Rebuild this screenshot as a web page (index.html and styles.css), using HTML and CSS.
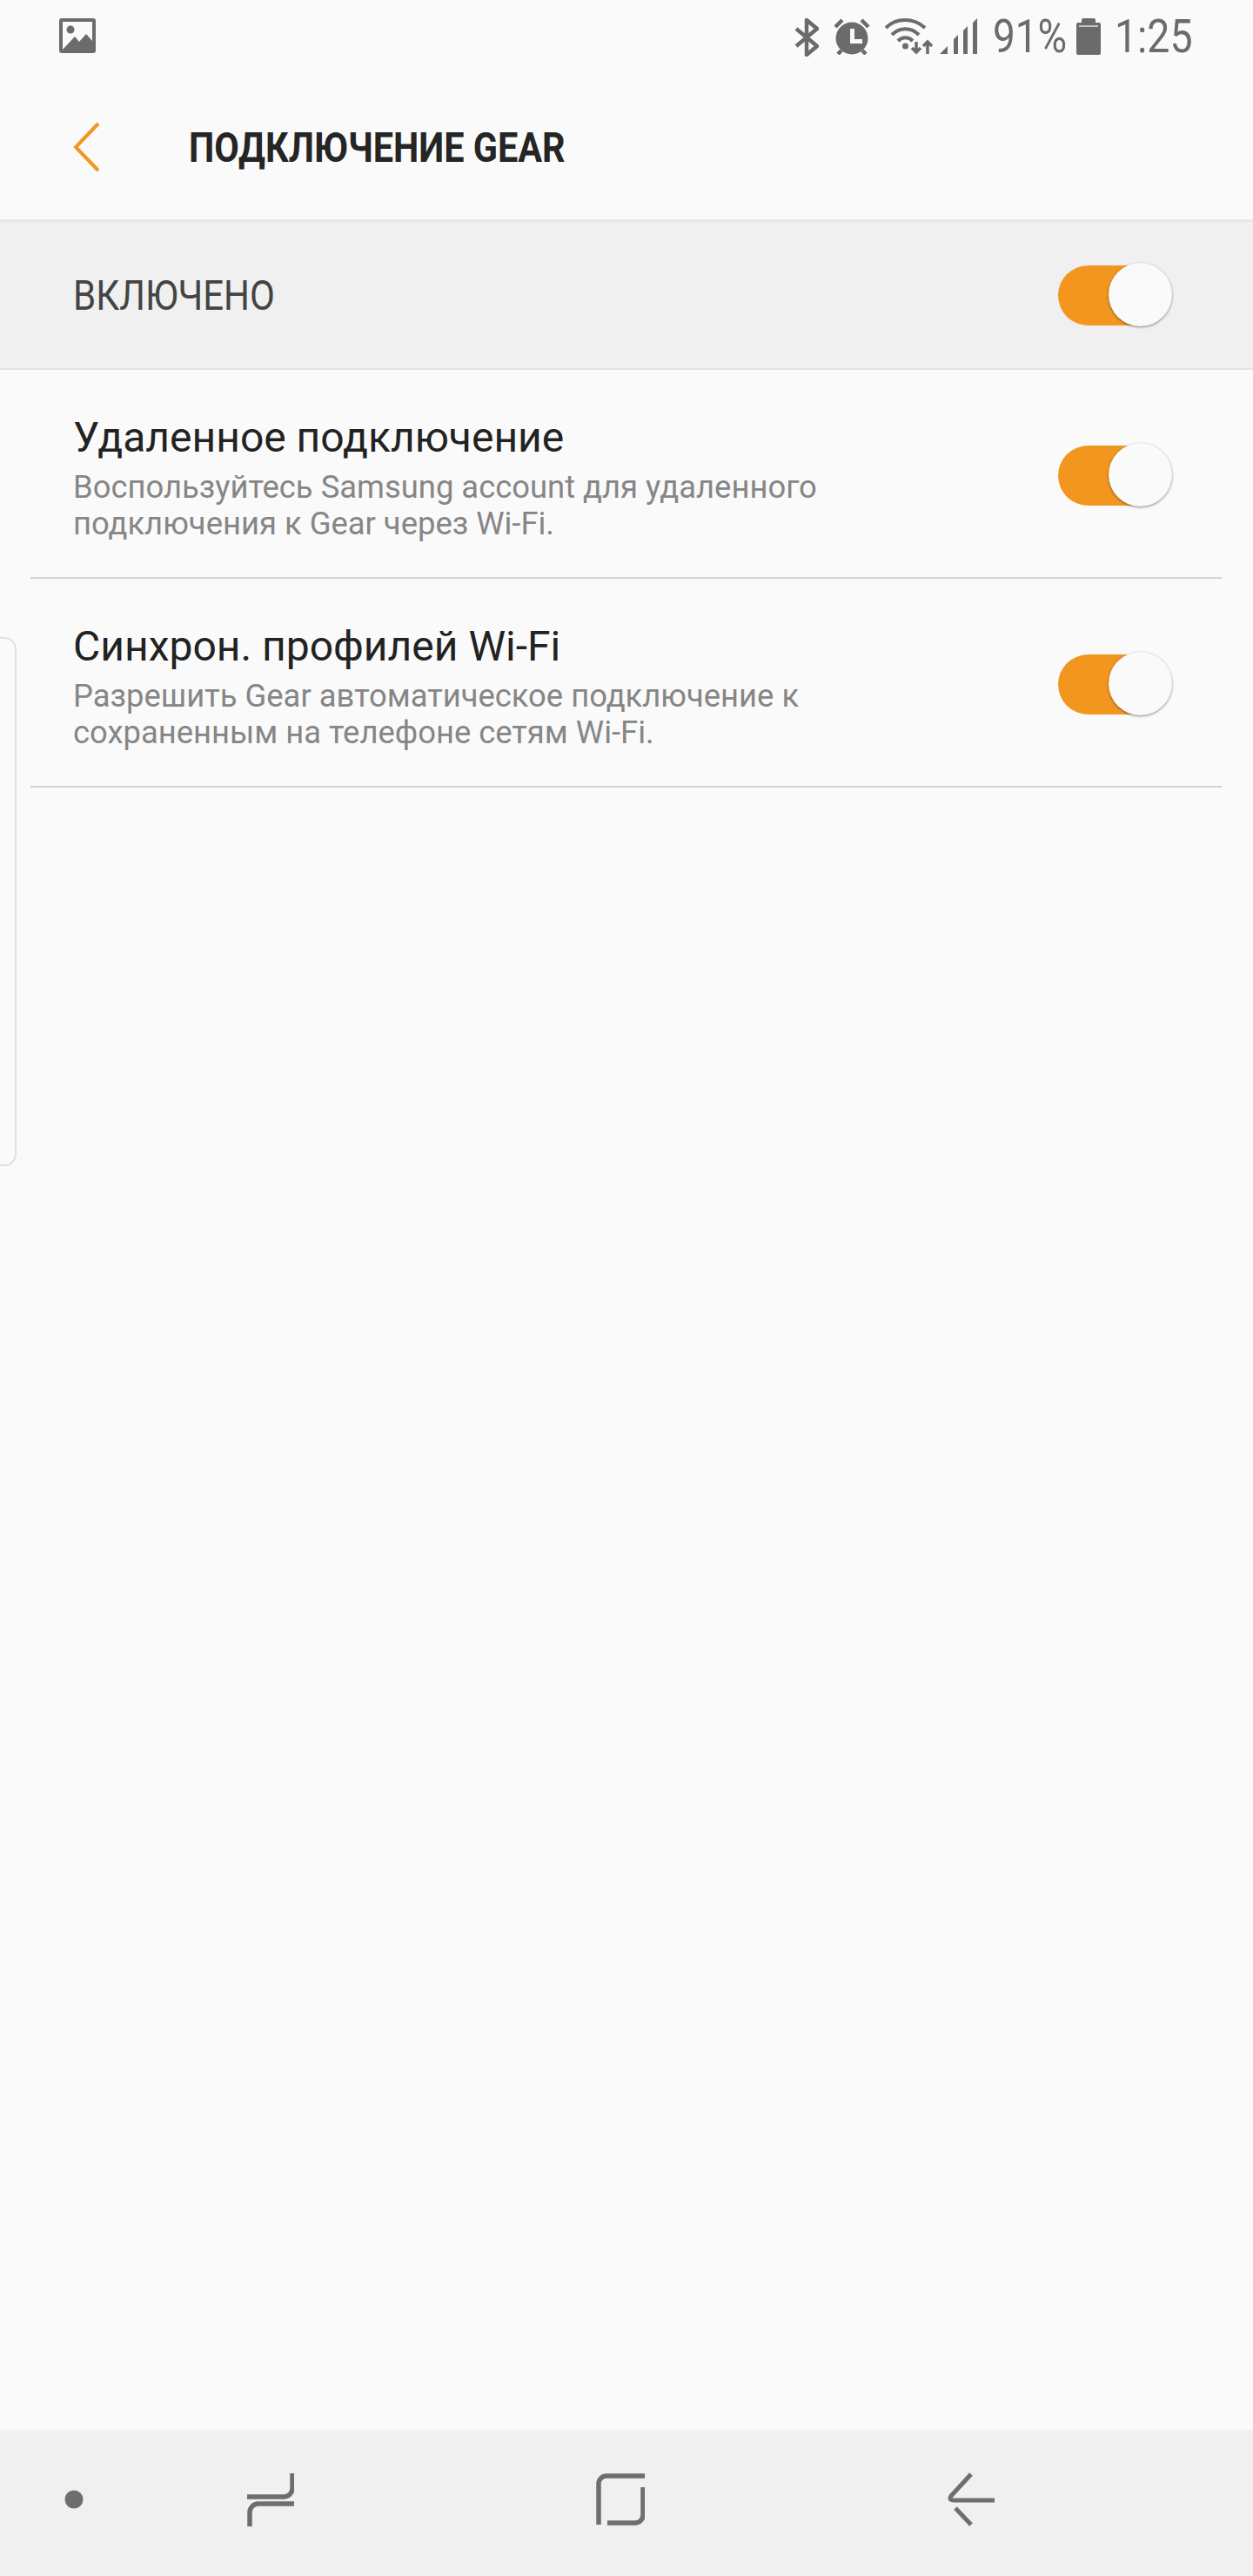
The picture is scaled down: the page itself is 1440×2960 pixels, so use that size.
FILE: index.html
```html
<!DOCTYPE html>
<html lang="ru">
<head>
<meta charset="utf-8">
<title>Подключение Gear</title>
<link rel="stylesheet" href="styles.css">
</head>
<body>
<div class="screen">
  <div class="status">
    <svg class="ic-image" width="42" height="40" viewBox="0 0 42 40"><rect width="42" height="40" rx="3" fill="#6b6b6b"/><path d="M4 4h34v22l-7-8-8 9-5-6-14 15z" fill="#fafafa"/><circle cx="13" cy="13" r="4.500" fill="#6b6b6b"/></svg>
    <div class="status-right">
      <svg class="ic-bt" width="28" height="44" viewBox="0 0 28 44"><path d="M2 12l24 20-12 10V2l12 10L2 32" fill="none" stroke="#6b6b6b" stroke-width="4.500" stroke-linejoin="round"/></svg>
      <svg class="ic-alarm" width="42" height="42" viewBox="0 0 42 42"><circle cx="21" cy="23" r="18.500" fill="#6b6b6b"/><path d="M2 10l8-8M40 10l-8-8M5 41l4-4M37 41l-4-4" stroke="#6b6b6b" stroke-width="4.500" fill="none"/><path d="M19 12h5v12h9v5H19z" fill="#fafafa"/></svg>
      <svg class="ic-wifi" width="56" height="42" viewBox="0 0 56 42"><path d="M1 11C13 -1 33 -1 46 11M8 19C17 10 30 10 39 19M15 26C20 21 27 21 32 26" fill="none" stroke="#6b6b6b" stroke-width="4"/><circle cx="23.500" cy="32" r="3.500" fill="#6b6b6b"/><path d="M36 27v12M31 34l5 5 5-5M49 41V27M44 32l5-5 5 5" fill="none" stroke="#6b6b6b" stroke-width="3.500"/></svg>
      <svg class="ic-signal" width="43" height="42" viewBox="0 0 43 42"><path d="M0 41L9 32V41zM16 41V24l5-5V41zM27 41V14l5-5V41zM38 41V5l5-5V41z" fill="#6b6b6b"/></svg>
      <span class="pct"><span class="pct-text">91%</span></span>
      <svg class="ic-batt" width="28" height="42" viewBox="0 0 28 42"><path d="M8 0h12a2 2 0 0 1 2 2v3h4a2 2 0 0 1 2 2v33a2 2 0 0 1-2 2H2a2 2 0 0 1-2-2V7a2 2 0 0 1 2-2h4V2a2 2 0 0 1 2-2z" fill="#6b6b6b"/><rect x="3" y="8" width="22" height="2" fill="#c4c4c4"/></svg>
      <span class="time"><span class="time-text">1:25</span></span>
    </div>
  </div>

  <header class="appbar">
    <svg class="ic-chev" width="32" height="58" viewBox="0 0 32 58"><path d="M30 2L4 29l26 27" fill="none" stroke="#f29620" stroke-width="4"/></svg>
    <h1 class="title"><span class="title-text">ПОДКЛЮЧЕНИЕ GEAR</span></h1>
  </header>

  <section class="master">
    <span class="master-label"><span class="master-text">ВКЛЮЧЕНО</span></span>
    <span class="switch"><span class="knob"></span></span>
  </section>

  <section class="row">
    <div class="row-body">
      <div class="row-title">Удаленное подключение</div>
      <div class="row-sub">Воспользуйтесь Samsung account для удаленного<br>подключения к Gear через Wi-Fi.</div>
    </div>
    <span class="switch"><span class="knob"></span></span>
  </section>
  <section class="row">
    <div class="row-body">
      <div class="row-title">Синхрон. профилей Wi-Fi</div>
      <div class="row-sub">Разрешить Gear автоматическое подключение к<br>сохраненным на телефоне сетям Wi-Fi.</div>
    </div>
    <span class="switch"><span class="knob"></span></span>
  </section>

  <div class="spacer"></div>

  <nav class="navbar">
    <svg class="nav-dot" width="22" height="22" viewBox="0 0 22 22"><circle cx="11" cy="11" r="10.500" fill="#6e6e6e"/></svg>
    <svg class="nav-recent" width="54" height="62" viewBox="0 0 54 62"><path d="M0 28H42a10 10 0 0 0 10-10V1M54 36H12A10 10 0 0 0 3 46V62" fill="none" stroke="#6e6e6e" stroke-width="5.500"/></svg>
    <svg class="nav-home" width="56" height="60" viewBox="0 0 56 60"><path d="M3 59V12A9 9 0 0 1 12 3H56M54 16V48a9 9 0 0 1-9 9H13" fill="none" stroke="#6e6e6e" stroke-width="5.500"/></svg>
    <svg class="nav-back" width="54" height="62" viewBox="0 0 54 62"><path d="M27 2L4 27q-3 5 3 5H54M9 41L27 60" fill="none" stroke="#6e6e6e" stroke-width="5"/></svg>
  </nav>

  <div class="edge-handle"></div>
</div>
</body>
</html>
```

FILE: styles.css
```css
html, body { margin: 0; padding: 0; }
body { background: #fafafa; font-family: Roboto, "Liberation Sans", sans-serif; }
.screen { position: relative; width: 1440px; height: 2960px; display: flex; flex-direction: column; overflow: hidden; background: #fafafa; }

.status { height: 84px; flex: none; display: flex; align-items: flex-start; justify-content: space-between; padding: 21px 75px 0 68px; box-sizing: border-box; }
.status-right { display: flex; align-items: flex-start; }
.ic-bt { margin-right: 17px; }
.ic-alarm { margin-right: 17px; }
.ic-wifi { margin-right: 7px; }
.ic-signal { margin-right: 18px; }
.pct { width: 82px; margin-right: 14px; }
.time { width: 84px; }
.pct, .time { display: block; height: 42px; line-height: 42px; font-size: 54px; color: #6b6b6b; white-space: nowrap; }
.pct-text { display: inline-block; transform: scaleX(.85); transform-origin: 0 50%; }
.time-text { display: inline-block; transform: scaleX(.86); transform-origin: 0 50%; }
.ic-batt { margin-right: 16px; }

.appbar { height: 168px; flex: none; display: flex; align-items: center; box-sizing: border-box; padding-left: 83px; }
.ic-chev { margin-right: 102px; margin-top: 2px; }
.title { margin: 4px 0 0; font-size: 48px; font-weight: 700; color: #252525; line-height: 56px; white-space: nowrap; }
.title-text { display: inline-block; transform: scaleX(.862); transform-origin: 0 50%; }

.master { height: 173px; flex: none; box-sizing: border-box; background: #f0f0f0; border-top: 3px solid #e8e8e8; border-bottom: 2px solid #e2e2e2; display: flex; align-items: center; justify-content: space-between; padding: 0 99px 0 84px; }
.master-label { font-size: 48px; color: #444; white-space: nowrap; }
.master-text { display: inline-block; transform: scaleX(.875); transform-origin: 0 50%; }

.row { height: 240px; flex: none; box-sizing: border-box; margin: 0 36px 0 35px; padding: 0 63px 2px 49px; border-bottom: 2px solid #d2d2d2; display: flex; align-items: center; justify-content: space-between; }
.row > .switch { margin-top: 6px; }
.row-body { padding-top: 11px; }
.row-title { font-size: 48px; line-height: 56px; color: #222; }
.row-sub { font-size: 36.400px; line-height: 41.500px; color: #868686; margin-top: 8px; }

.switch { position: relative; display: block; width: 125px; height: 69px; border-radius: 35px; background: #f29620; flex: none; }
.knob { position: absolute; right: -6px; top: -3px; width: 73px; height: 73px; border-radius: 50%; background: #fafafa; box-shadow: 0 1px 3px rgba(0,0,0,.45); }

.spacer { flex: 1; }

.navbar { position: relative; height: 168px; flex: none; box-sizing: border-box; padding-bottom: 8px; background: #f0f0f0; display: flex; align-items: center; }
.nav-dot { margin-left: 74px; }
.nav-recent { margin-left: 188px; }
.nav-home { margin-left: 347px; }
.nav-back { margin-left: 348px; }

.edge-handle { position: absolute; left: -20px; top: 732px; width: 35px; height: 604px; border: 2px solid #e0e0e0; border-radius: 14px; }
```
